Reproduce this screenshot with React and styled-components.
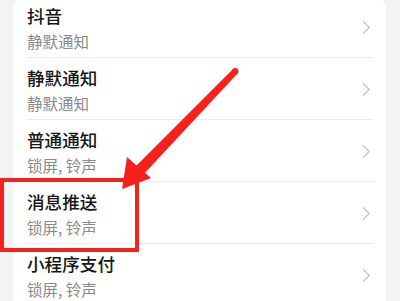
import React from 'react'
import styled, { createGlobalStyle } from 'styled-components'

const items = [
  { title: '抖音', sub: '静默通知' },
  { title: '静默通知', sub: '静默通知' },
  { title: '普通通知', sub: '锁屏, 铃声' },
  { title: '消息推送', sub: '锁屏, 铃声' },
  { title: '小程序支付', sub: '锁屏, 铃声' },
]

export default function App() {
  return (
    <>
      <GlobalStyle />
      <Page>
        <Card>
          {items.map((item, i) => (
            <Row key={i}>
              <RowInner last={i === items.length - 1}>
                <Texts>
                  <Title>{item.title}</Title>
                  <Sub>{item.sub}</Sub>
                </Texts>
                <Chevron viewBox="0 0 10 16">
                  <path d="M1.5 1.5 L8 8 L1.5 14.5" />
                </Chevron>
              </RowInner>
            </Row>
          ))}
        </Card>
        <Highlight />
        <Arrow viewBox="0 0 400 301">
          <polygon
            fill="#f4221a"
            points="233,69 237.5,73.5 142,176 134,168"
          />
          <circle cx="235.2" cy="71.2" r="3.2" fill="#f4221a" />
          <polygon fill="#f4221a" points="122,189 127,157 151,178" />
        </Arrow>
      </Page>
    </>
  )
}

const GlobalStyle = createGlobalStyle`
  body {
    margin: 0;
    background: #f2f3f5;
    font-family: "Noto Sans CJK SC", "Noto Sans", sans-serif;
  }
`

const Page = styled.div`
  position: relative;
  width: 400px;
  height: 301px;
  overflow: hidden;
  background: #f2f3f5;
`

const Card = styled.div`
  margin: -4px 14px 0 13px;
  background: #ffffff;
  border-radius: 14px 14px 0 0;
`

const Row = styled.div`
  padding-left: 14px;
`

const RowInner = styled.div`
  display: flex;
  align-items: center;
  justify-content: space-between;
  height: 61px;
  padding-right: 2px;
  margin-right: 13px;
  border-bottom: ${(p) => (p.last ? 'none' : '1px solid #ececec')};
`

const Texts = styled.div`
  display: flex;
  flex-direction: column;
  padding-top: 3px;
`

const Title = styled.div`
  font-size: 17.6px;
  line-height: 24px;
  font-weight: 500;
  color: #161616;
`

const Sub = styled.div`
  margin-top: 2px;
  font-size: 15.5px;
  line-height: 22px;
  color: #8a8a8a;
`

const Chevron = styled.svg`
  width: 9px;
  height: 15px;
  fill: none;
  stroke: #c2c2c2;
  stroke-width: 1.4;
  stroke-linecap: round;
  stroke-linejoin: round;
  margin-top: 2px;
`

const Highlight = styled.div`
  position: absolute;
  left: 0;
  top: 178px;
  width: 131px;
  height: 66px;
  border: 4px solid #f4221a;
`

const Arrow = styled.svg`
  position: absolute;
  left: 0;
  top: 0;
  width: 400px;
  height: 301px;
  pointer-events: none;
`
